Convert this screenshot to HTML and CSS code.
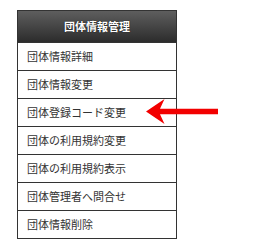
FILE: index.html
```html
<!DOCTYPE html>
<html lang="ja">
<head>
<meta charset="utf-8">
<link rel="stylesheet" href="styles.css">
</head>
<body>
<div class="page">
  <div class="menu">
    <div class="menu-head">団体情報管理</div>
    <ul class="menu-list">
      <li class="menu-item">団体情報詳細</li>
      <li class="menu-item">団体情報変更</li>
      <li class="menu-item">団体登録コード変更</li>
      <li class="menu-item">団体の利用規約変更</li>
      <li class="menu-item">団体の利用規約表示</li>
      <li class="menu-item">団体管理者へ問合せ</li>
      <li class="menu-item">団体情報削除</li>
    </ul>
  </div>
  <svg class="arrow" width="80" height="30" viewBox="0 0 80 30">
    <path d="M0,13.5 L18.5,1 L14,10.8 L72,10.8 L72,16.2 L14,16.2 L18.5,26 Z" fill="#f20000"/>
  </svg>
</div>
</body>
</html>
```
FILE: styles.css
```css
html, body {
  margin: 0;
  padding: 0;
  background: #fff;
}
.page {
  position: relative;
  width: 254px;
  height: 248px;
  padding: 10px 0 0 17px;
  box-sizing: border-box;
  font-family: "Noto Sans CJK JP", "Noto Sans", sans-serif;
}
.menu {
  width: 160px;
  box-sizing: border-box;
  border: 1px solid #333;
}
.menu-head {
  height: 31px;
  line-height: 31px;
  text-align: center;
  color: #fff;
  font-weight: bold;
  font-size: 11px;
  background: linear-gradient(#5e5e5e, #2c2c2c);
  text-shadow: 0 0 1px #000;
}
.menu-list {
  list-style: none;
  margin: 0;
  padding: 0;
}
.menu-item {
  height: 27px;
  line-height: 27px;
  border-top: 1px solid #333;
  padding-left: 9px;
  font-size: 11px;
  color: #333;
}
.arrow {
  position: absolute;
  left: 146px;
  top: 98px;
}
```
